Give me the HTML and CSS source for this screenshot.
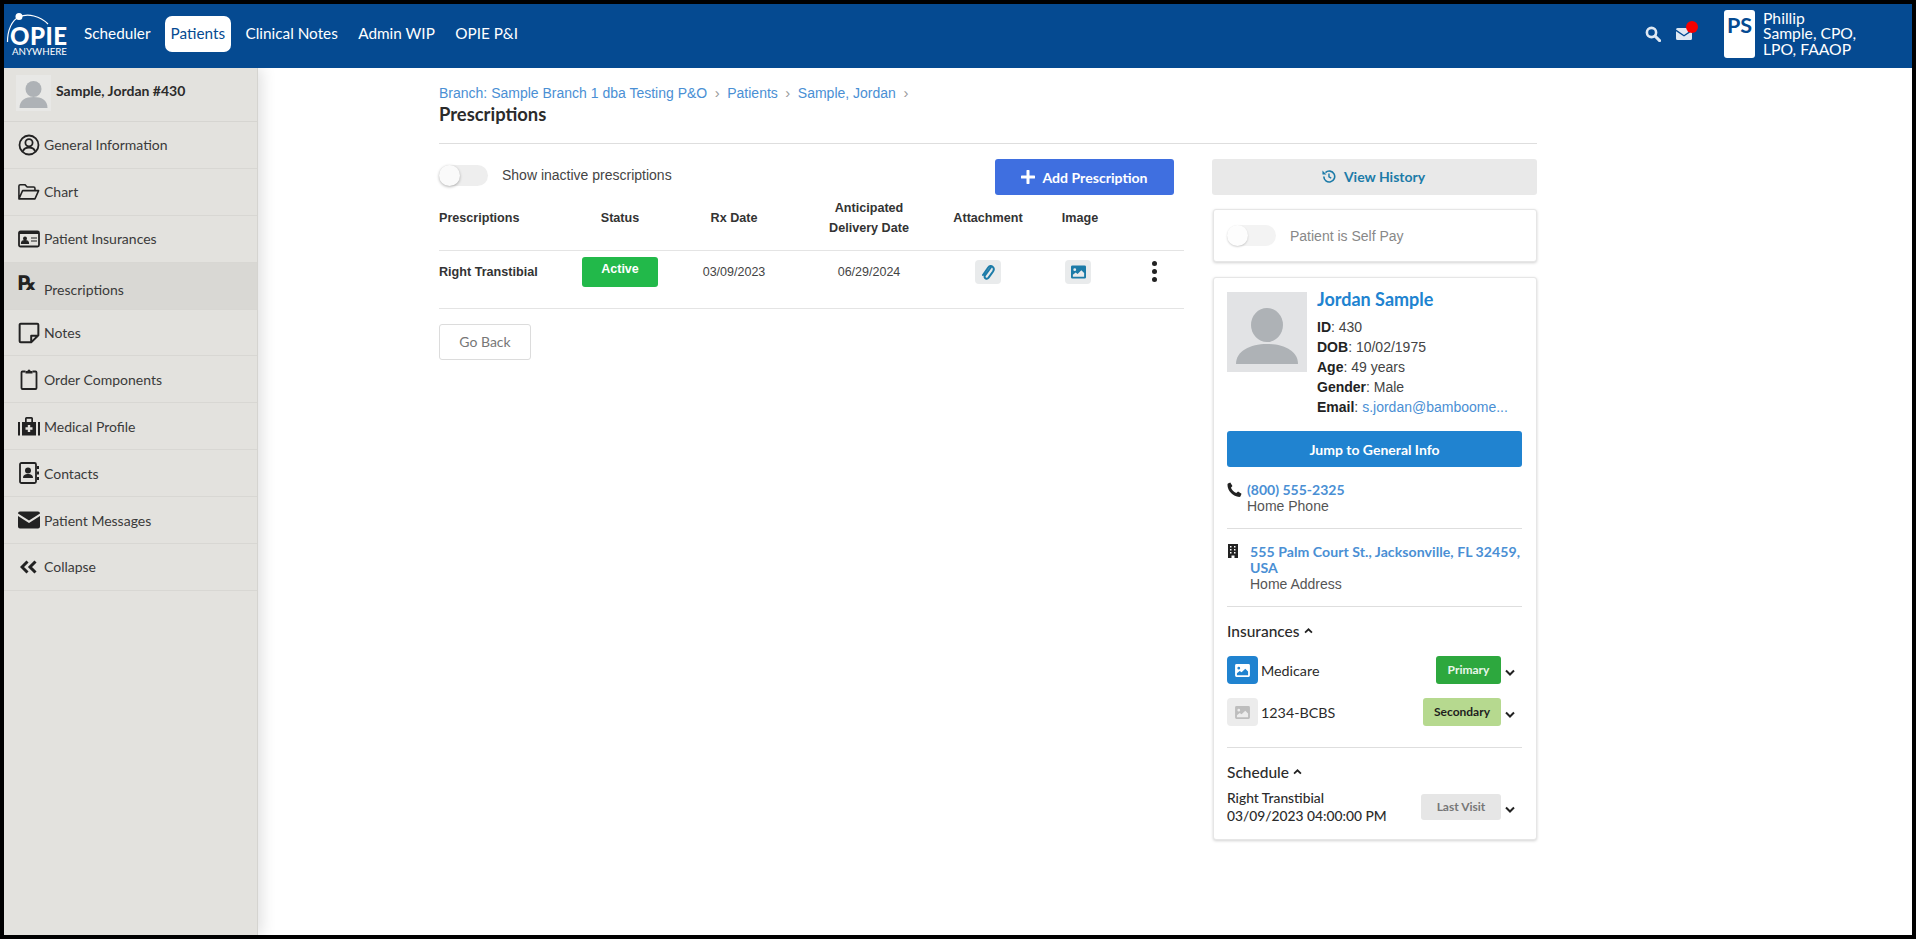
FILE: index.html
```html
<!DOCTYPE html>
<html lang="en">
<head>
<meta charset="utf-8">
<title>Prescriptions</title>
<link rel="stylesheet" href="styles.css">
</head>
<body>
<div class="frame">
  <header class="topbar">
    <div class="logo">
      <svg class="logo-art" viewBox="0 0 62 50">
        <path d="M1.500 30C1.500 18 6 8 13 5C22 1 34 4 42 12" fill="none" stroke="#fff" stroke-width="1.200"/>
        <circle cx="13" cy="4.500" r="3.500" fill="#fff"/>
        <text class="logo-main" x="4" y="33" textLength="57" lengthAdjust="spacing">OPIE</text>
        <text class="logo-sub" x="6" y="42.500" textLength="55" lengthAdjust="spacingAndGlyphs">ANYWHERE</text>
      </svg>
    </div>
    <nav class="topnav">
      <a class="topnav-link">Scheduler</a>
      <a class="topnav-link is-active">Patients</a>
      <a class="topnav-link">Clinical Notes</a>
      <a class="topnav-link">Admin WIP</a>
      <a class="topnav-link">OPIE P&amp;I</a>
    </nav>
    <div class="top-tools">
      <svg class="tool-search" viewBox="0 0 16 16"><circle cx="6.500" cy="6.500" r="4.600" fill="none" stroke="#dfe8f3" stroke-width="2.600"/><path d="M10 10l4.600 4.600" stroke="#dfe8f3" stroke-width="3" stroke-linecap="round"/></svg>
      <span class="tool-mail">
        <svg viewBox="0 0 16 12"><path d="M1.500 0h13A1.500 1.500 0 0 1 16 1.500L8 7 0 1.500A1.500 1.500 0 0 1 1.500 0zM0 3.200l8 5.400 8-5.400v7.300a1.500 1.500 0 0 1-1.500 1.500h-13A1.500 1.500 0 0 1 0 10.500z" fill="#dfe8f3"/></svg>
        <i class="mail-dot"></i>
      </span>
      <div class="user-badge">PS</div>
      <div class="user-name">Phillip<br>Sample, CPO,<br>LPO, FAAOP</div>
    </div>
  </header>

  <div class="body-row">
    <aside class="sidebar">
      <div class="side-patient">
        <span class="side-avatar">
          <svg viewBox="0 0 34 36"><circle cx="17" cy="14" r="8" fill="#aeb2b6"/><path d="M3 33c0-8 6-11 14-11s14 3 14 11z" fill="#aeb2b6"/></svg>
        </span>
        <span class="side-patient-name">Sample, Jordan #430</span>
      </div>
      <a class="side-item">
        <svg class="side-icon" viewBox="0 0 22 22"><circle cx="11" cy="11" r="9.500" fill="none" stroke="#222" stroke-width="1.800"/><circle cx="11" cy="8.800" r="3.600" fill="none" stroke="#222" stroke-width="1.800"/><path d="M4.800 17.500c1-3 3.200-4 6.200-4s5.200 1 6.200 4" fill="none" stroke="#222" stroke-width="1.800"/></svg>
        <span>General Information</span>
      </a>
      <a class="side-item">
        <svg class="side-icon" viewBox="0 0 24 18"><path d="M1 16V2.500A1.500 1.500 0 0 1 2.500 1h5l2.500 2.500h7A1.500 1.500 0 0 1 18.500 5v2.500M1 16.500l4-9h17.500l-4 9z" fill="none" stroke="#222" stroke-width="1.700" stroke-linejoin="round"/></svg>
        <span>Chart</span>
      </a>
      <a class="side-item">
        <svg class="side-icon" viewBox="0 0 22 18"><rect x="1" y="1.500" width="20" height="15" rx="1.500" fill="none" stroke="#222" stroke-width="1.800"/><rect x="1" y="1.500" width="20" height="2.500" fill="#222"/><circle cx="7" cy="8.500" r="2" fill="#222"/><path d="M3.500 13.500c0-2 1.500-2.800 3.500-2.800s3.500.8 3.500 2.800zM13 8h6M13 11h6" fill="#222" stroke="#222" stroke-width="1.200"/></svg>
        <span>Patient Insurances</span>
      </a>
      <a class="side-item is-current">
        <span class="rx-icon">℞</span>
        <span class="side-item-low">Prescriptions</span>
      </a>
      <a class="side-item">
        <svg class="side-icon" viewBox="0 0 20 20"><path d="M2.500 1.500h15a1 1 0 0 1 1 1V12l-6.500 6.500H2.500a1 1 0 0 1-1-1v-15a1 1 0 0 1 1-1zM18 12.500h-6v5.500" fill="none" stroke="#222" stroke-width="1.800" stroke-linejoin="round"/></svg>
        <span>Notes</span>
      </a>
      <a class="side-item">
        <svg class="side-icon" viewBox="0 0 18 22"><path d="M5.500 3.500H2.500a1 1 0 0 0-1 1v15.500a1 1 0 0 0 1 1h13a1 1 0 0 0 1-1V4.500a1 1 0 0 0-1-1h-3" fill="none" stroke="#222" stroke-width="1.800"/><path d="M5.500 5.500V3h2a1.500 1.500 0 0 1 3 0h2v2.500z" fill="#222"/></svg>
        <span>Order Components</span>
      </a>
      <a class="side-item">
        <svg class="side-icon" viewBox="0 0 22 19"><path d="M0 5.500h2V19H0zM20 5.500h2V19h-2zM4 5.500h3V2a1.500 1.500 0 0 1 1.500-1.500h5A1.500 1.500 0 0 1 15 2v3.500h3V19H4zM8.700 5.500h4.600V2.300H8.700z" fill="#222" fill-rule="evenodd"/><path d="M11 8.500v7M7.500 12h7" stroke="#e3e2de" stroke-width="2.400"/></svg>
        <span>Medical Profile</span>
      </a>
      <a class="side-item">
        <svg class="side-icon" viewBox="0 0 20 22"><rect x="1" y="1" width="16" height="20" rx="1.500" fill="none" stroke="#222" stroke-width="1.800"/><circle cx="9" cy="8.500" r="3" fill="#222"/><path d="M4 16c0-3 2.200-4 5-4s5 1 5 4z" fill="#222"/><path d="M18 4h2v3h-2zM18 9.500h2v3h-2zM18 15h2v3h-2z" fill="#222"/></svg>
        <span>Contacts</span>
      </a>
      <a class="side-item">
        <svg class="side-icon" viewBox="0 0 22 17"><path d="M2 0h18a2 2 0 0 1 2 2L11 9 0 2a2 2 0 0 1 2-2zM0 4.500l11 7 11-7V15a2 2 0 0 1-2 2H2a2 2 0 0 1-2-2z" fill="#222"/></svg>
        <span>Patient Messages</span>
      </a>
      <a class="side-item">
        <svg class="side-icon side-icon-small" viewBox="0 0 18 14"><path d="M7.500 1.500L2 7l5.500 5.500M15.500 1.500L10 7l5.500 5.500" fill="none" stroke="#222" stroke-width="3"/></svg>
        <span>Collapse</span>
      </a>
    </aside>

    <main class="main">
      <div class="breadcrumb">
        <a>Branch: Sample Branch 1 dba Testing P&amp;O</a><i>›</i><a>Patients</a><i>›</i><a>Sample, Jordan</a><i>›</i>
      </div>
      <h1 class="page-title">Prescriptions</h1>
      <div class="columns">
        <section class="left-col">
          <div class="toolbar">
            <span class="switch"><i></i></span>
            <span class="switch-label">Show inactive prescriptions</span>
            <button class="btn-add"><svg viewBox="0 0 14 14"><path d="M7 1v12M1 7h12" stroke="#fff" stroke-width="3" stroke-linecap="round"/></svg>Add Prescription</button>
          </div>
          <div class="rx-grid rx-head">
            <div class="cell-left">Prescriptions</div>
            <div>Status</div>
            <div>Rx Date</div>
            <div class="two-line">Anticipated<br>Delivery Date</div>
            <div>Attachment</div>
            <div>Image</div>
            <div></div>
          </div>
          <div class="rx-grid rx-row">
            <div class="cell-left cell-strong">Right Transtibial</div>
            <div><span class="badge-active">Active</span></div>
            <div>03/09/2023</div>
            <div>06/29/2024</div>
            <div><span class="square-btn"><svg class="clip" viewBox="0 0 14 18"><path d="M10.500 3.500L4 12.500c-1.600 2.400 1.800 4.400 3.600 2.200l4.400-6.200C14.500 4.500 10 1 7.200 4.500L2 12" fill="none" stroke="#1c7ba8" stroke-width="2" stroke-linecap="round"/></svg></span></div>
            <div><span class="square-btn img-btn"><svg viewBox="0 0 16 14"><path d="M1.500 0h13A1.500 1.500 0 0 1 16 1.500v11a1.500 1.500 0 0 1-1.500 1.500h-13A1.500 1.500 0 0 1 0 12.500v-11A1.500 1.500 0 0 1 1.500 0zM4 3a1.500 1.500 0 1 0 0 3 1.500 1.500 0 0 0 0-3zM2 12h12V8l-3-3-4 4-2-1.500-3 2.500z" fill="#1c7ba8" fill-rule="evenodd"/></svg></span></div>
            <div><span class="dots"><i></i><i></i><i></i></span></div>
          </div>
          <button class="btn-back">Go Back</button>
        </section>

        <aside class="right-col">
          <button class="btn-history"><svg viewBox="0 0 16 16"><path d="M3 8a5.800 5.800 0 1 0 1.800-4.200" fill="none" stroke="#1c7ba8" stroke-width="1.700"/><path d="M1.500 1.500v4.300h4.300z" fill="#1c7ba8"/><path d="M8.500 4.700V8.300l2.400 1.500" fill="none" stroke="#1c7ba8" stroke-width="1.500"/></svg>View History</button>
          <div class="card self-pay">
            <span class="switch switch-faint"><i></i></span>
            <span class="self-pay-label">Patient is Self Pay</span>
          </div>
          <div class="card patient-card">
            <div class="patient-top">
              <div class="patient-photo">
                <svg viewBox="0 0 80 80"><ellipse cx="40" cy="33" rx="16" ry="17" fill="#aeb2b6"/><path d="M9 72c0-13 14-20 31-20s31 7 31 20z" fill="#aeb2b6"/></svg>
              </div>
              <div class="patient-info">
                <div class="patient-name">Jordan Sample</div>
                <div class="info-line"><b>ID</b>: 430</div>
                <div class="info-line"><b>DOB</b>: 10/02/1975</div>
                <div class="info-line"><b>Age</b>: 49 years</div>
                <div class="info-line"><b>Gender</b>: Male</div>
                <div class="info-line"><b>Email</b>: <a>s.jordan@bamboome...</a></div>
              </div>
            </div>
            <button class="btn-jump">Jump to General Info</button>
            <div class="contact contact-phone">
              <svg class="contact-icon" viewBox="0 0 16 16"><path d="M3.500.5l2.300 3.700-1.600 2c.9 2.400 2.900 4.500 5.600 5.600l2-1.600 3.700 2.300-1.200 3c-.3.300-.7.500-1.200.5C6.500 15.500.5 9.500.5 2.900c0-.5.200-.9.500-1.200z" fill="#222"/></svg>
              <div>
                <a class="contact-link">(800) 555-2325</a>
                <div class="contact-sub">Home Phone</div>
              </div>
            </div>
            <div class="divider"></div>
            <div class="contact contact-address">
              <svg class="contact-icon building" viewBox="0 0 12 14"><path d="M1 0h10v14H7.500v-2.500h-3V14H1z M3 2v1.500h1.500V2zM7 2v1.500h1.500V2zM3 5v1.500h1.500V5zM7 5v1.500h1.500V5zM3 8v1.500h1.500V8zM7 8v1.500h1.500V8z" fill="#222" fill-rule="evenodd"/></svg>
              <div>
                <a class="contact-link address-link">555 Palm Court St., Jacksonville, FL 32459,<br>USA</a>
                <div class="contact-sub">Home Address</div>
              </div>
            </div>
            <div class="divider"></div>
            <div class="section-head ins-head">Insurances <svg class="chev" viewBox="0 0 10 7"><path d="M1 5.500l4-4 4 4" fill="none" stroke="#222" stroke-width="2"/></svg></div>
            <div class="ins-row">
              <span class="ins-thumb thumb-on"><svg viewBox="0 0 16 14"><path d="M1.500 0h13A1.500 1.500 0 0 1 16 1.500v11a1.500 1.500 0 0 1-1.500 1.500h-13A1.500 1.500 0 0 1 0 12.500v-11A1.500 1.500 0 0 1 1.500 0zM4 3a1.500 1.500 0 1 0 0 3 1.500 1.500 0 0 0 0-3zM2 12h12V8l-3-3-4 4-2-1.500-3 2.500z" fill="#fff" fill-rule="evenodd"/></svg></span>
              <span class="ins-name">Medicare</span>
              <span class="ins-tag tag-primary">Primary</span>
              <svg class="chev chev-side" viewBox="0 0 10 7"><path d="M1 1.500l4 4 4-4" fill="none" stroke="#222" stroke-width="2"/></svg>
            </div>
            <div class="ins-row ins-row-2">
              <span class="ins-thumb thumb-off"><svg viewBox="0 0 16 14"><path d="M1.500 0h13A1.500 1.500 0 0 1 16 1.500v11a1.500 1.500 0 0 1-1.500 1.500h-13A1.500 1.500 0 0 1 0 12.500v-11A1.500 1.500 0 0 1 1.500 0zM4 3a1.500 1.500 0 1 0 0 3 1.500 1.500 0 0 0 0-3zM2 12h12V8l-3-3-4 4-2-1.500-3 2.500z" fill="#bdbdbd" fill-rule="evenodd"/></svg></span>
              <span class="ins-name">1234-BCBS</span>
              <span class="ins-tag tag-secondary">Secondary</span>
              <svg class="chev chev-side" viewBox="0 0 10 7"><path d="M1 1.500l4 4 4-4" fill="none" stroke="#222" stroke-width="2"/></svg>
            </div>
            <div class="divider divider-sched"></div>
            <div class="section-head sched-head">Schedule <svg class="chev" viewBox="0 0 10 7"><path d="M1 5.500l4-4 4 4" fill="none" stroke="#222" stroke-width="2"/></svg></div>
            <div class="sched-row">
              <div class="sched-text">Right Transtibial<br>03/09/2023 04:00:00 PM</div>
              <span class="ins-tag tag-last">Last Visit</span>
              <svg class="chev chev-side" viewBox="0 0 10 7"><path d="M1 1.500l4 4 4-4" fill="none" stroke="#222" stroke-width="2"/></svg>
            </div>
          </div>
        </aside>
      </div>
    </main>
  </div>
</div>
</body>
</html>
```

FILE: styles.css
```css
* { box-sizing: border-box; }
html, body { margin: 0; height: 100%; overflow: hidden; background: #000; }
a { color: inherit; text-decoration: none; }
button { font: inherit; border: 0; cursor: pointer; }

.frame {
  height: 939px;
  border: 4px solid #000;
  display: flex;
  flex-direction: column;
  background: #fff;
  font-family: "Liberation Sans", Arial, sans-serif;
  color: #333;
}

/* top bar */
.topbar {
  flex: 0 0 64px;
  background: #054a91;
  display: flex;
  align-items: center;
  padding-bottom: 4px;
  font-family: Lato, sans-serif;
  color: #fff;
  position: relative;
  z-index: 1;
}
.logo {
  position: relative;
  flex: 0 0 80px;
  height: 60px;
}
.logo-art { position: absolute; left: 2px; top: 8px; width: 62px; height: 50px; }
.logo-main { font-family: Lato, sans-serif; font-size: 24px; font-weight: 900; fill: #fff; }
.logo-sub { font-family: Lato, sans-serif; font-size: 10px; fill: #fff; }
.topnav { display: flex; align-items: center; gap: 20.500px; }
.topnav-link { font-size: 15.300px; line-height: 35px; height: 36px; }
.topnav-link.is-active {
  background: #fff;
  color: #054a91;
  border-radius: 7px;
  padding: 0 6px;
  margin: 0 -6px 0 -6.500px;
}
.top-tools { margin-left: auto; display: flex; align-items: center; height: 60px; }
.tool-search { width: 16px; height: 16px; margin-right: 15px; }
.tool-mail { position: relative; display: block; width: 16px; height: 12px; margin-right: 32px; }
.tool-mail svg { display: block; width: 16px; height: 12px; }
.mail-dot {
  position: absolute;
  left: 10px;
  top: -7px;
  width: 12px;
  height: 12px;
  background: #f50000;
  border-radius: 50%;
}
.user-badge {
  width: 31px;
  height: 48px;
  background: #fff;
  color: #054a91;
  border-radius: 3px;
  font-size: 21.500px;
  line-height: 30px;
  font-weight: 700;
  text-align: center;
  margin-right: 8px;
}
.user-name { width: 149px; font-size: 15.700px; line-height: 15.500px; }

/* layout */
.body-row { flex: 1; display: flex; min-height: 0; }

/* sidebar */
.sidebar {
  flex: 0 0 254px;
  background: #e3e2de;
  border-right: 1px solid #d5d4d0;
  box-shadow: 4px 0 14px rgba(0, 0, 0, .12);
  font-family: Lato, sans-serif;
  font-size: 14px;
  color: #3a3a3a;
  position: relative;
}
.side-patient {
  height: 54px;
  display: flex;
  align-items: flex-start;
  padding: 7px 0 0 12px;
  border-bottom: 1px solid #d6d5d1;
}
.side-avatar { width: 35px; height: 36px; background: #e8e8e6; display: block; }
.side-avatar svg { display: block; width: 35px; height: 36px; }
.side-patient-name { margin: 7px 0 0 5px; font-weight: 700; color: #2b2b2b; line-height: 17px; }
.side-item {
  height: 46.900px;
  display: flex;
  align-items: center;
  padding-left: 14px;
  border-bottom: 1.500px solid #d8d7d3;
  position: relative;
}
.side-item.is-current { background: #d9d8d4; }
.side-icon { width: 22px; height: 22px; flex: none; margin-right: 4px; }
.side-icon-small { width: 18px; height: 14px; margin: 0 6px 0 2px; }
.side-item-low { margin-top: 7px; }
.rx-icon {
  flex: none;
  width: 22px;
  height: 26px;
  margin-right: 4px;
  margin-top: -5px;
  color: #222;
  font-family: "DejaVu Sans", sans-serif;
  font-weight: 700;
  font-size: 20px;
  line-height: 26px;
  white-space: nowrap;
}

/* main */
.main { flex: 1; padding: 16px 0 0 181px; min-width: 0; background: #fff; }
.breadcrumb {
  width: 1098px;
  height: 18px;
  font-size: 14px;
  line-height: 16px;
  color: #4a8fd4;
  display: flex;
  align-items: center;
}
.breadcrumb i { font-style: normal; color: #9a9a9a; margin: 0 7.500px; font-size: 15px; }
.page-title {
  width: 1098px;
  margin: 0;
  padding: 1px 0 18px;
  font-family: Lato, sans-serif;
  font-size: 18.400px;
  line-height: 22px;
  font-weight: 700;
  color: #2b2b2b;
  border-bottom: 1px solid #dedede;
}
.columns { width: 1098px; display: flex; gap: 28px; padding-top: 15px; }
.left-col { flex: 0 0 745px; }
.right-col { flex: 0 0 325px; }

/* toolbar */
.toolbar { display: flex; align-items: flex-start; height: 39px; }
.switch {
  display: block;
  flex: none;
  position: relative;
  width: 49px;
  height: 21px;
  margin-top: 6px;
  border-radius: 11px;
  background: #eeeeee;
}
.switch i {
  position: absolute;
  left: 0;
  top: 0;
  width: 21px;
  height: 21px;
  border-radius: 50%;
  background: #fafafa;
  box-shadow: 0 1px 3px rgba(0, 0, 0, .3);
}
.switch-label { margin: 8px 0 0 14px; font-size: 14px; line-height: 16px; color: #444; }
.btn-add {
  margin-left: auto;
  margin-right: 10px;
  width: 179px;
  height: 36px;
  padding-right: 6px;
  background: #3f6fe0;
  border-radius: 3px;
  color: #fff;
  font-family: Lato, sans-serif;
  font-size: 14.100px;
  font-weight: 700;
  display: flex;
  align-items: center;
  justify-content: center;
}
.btn-add svg { width: 14px; height: 14px; margin-right: 7px; }

/* table */
.rx-grid {
  display: grid;
  grid-template-columns: 144px 74px 154px 116px 122px 62px 73px;
  text-align: center;
  font-size: 12.500px;
}
.rx-head {
  height: 53px;
  padding-bottom: 13px;
  font-weight: 700;
  font-size: 12.600px;
  color: #333;
  align-items: center;
  border-bottom: 1.500px solid #e4e4e4;
}
.two-line { line-height: 20px; }
.cell-left { text-align: left; }
.rx-row {
  height: 58px;
  padding-bottom: 16px;
  align-items: center;
  border-bottom: 1.500px solid #e4e4e4;
  color: #444;
}
.cell-strong { font-weight: 700; font-size: 12.600px; color: #333; }
.badge-active {
  display: block;
  width: 76px;
  height: 30px;
  margin-left: -1px;
  background: #22b94a;
  border-radius: 3px;
  color: #fff;
  font-weight: 700;
  font-size: 12.500px;
  line-height: 25px;
}
.square-btn {
  display: inline-flex;
  align-items: center;
  justify-content: center;
  width: 26px;
  height: 24px;
  background: #e9ebec;
  border-radius: 4px;
  vertical-align: middle;
}
.square-btn svg { width: 15px; height: 14px; }
.square-btn .clip { width: 14px; height: 18px; }
.img-btn { margin-right: 4px; }
.dots { display: inline-flex; flex-direction: column; gap: 3px; vertical-align: middle; margin-left: 14px; }
.dots i { width: 5px; height: 5px; border-radius: 50%; background: #222; display: block; }
.btn-back {
  margin-top: 15px;
  display: block;
  width: 92px;
  height: 36px;
  padding-bottom: 2px;
  background: #fff;
  border: 1px solid #dcdcdc;
  border-radius: 3px;
  color: #777;
  font-family: Lato, sans-serif;
  font-size: 14px;
}

/* right column */
.btn-history {
  width: 325px;
  height: 36px;
  padding: 0 3px 2px 0;
  background: #e9e9e9;
  border-radius: 3px;
  color: #1c7ba8;
  font-family: Lato, sans-serif;
  font-size: 14px;
  font-weight: 700;
  display: flex;
  align-items: center;
  justify-content: center;
}
.btn-history svg { width: 15px; height: 15px; margin-right: 8px; }
.card {
  width: 324px;
  margin-left: 1px;
  background: #fff;
  border: 1px solid #e6e6e6;
  border-radius: 3px;
  box-shadow: 0 1px 3px rgba(0, 0, 0, .18);
}
.self-pay {
  margin-top: 14px;
  height: 53px;
  display: flex;
  align-items: center;
  padding-left: 13px;
}
.switch-faint { margin-top: 0; background: #f3f3f3; }
.switch-faint i { background: #fdfdfd; box-shadow: 0 1px 2px rgba(0, 0, 0, .18); }
.self-pay-label { margin-left: 14px; font-size: 14px; color: #888; }
.patient-card { margin-top: 15px; height: 563px; padding: 14px 14px 0 13px; }
.patient-top { display: flex; height: 139px; }
.patient-photo { width: 80px; height: 80px; background: #e2e3e5; flex: none; }
.patient-photo svg { display: block; width: 80px; height: 80px; }
.patient-info { margin-left: 10px; min-width: 0; }
.patient-name {
  font-family: Lato, sans-serif;
  font-size: 18px;
  line-height: 22px;
  font-weight: 700;
  color: #2083d0;
  margin: -4px 0 7px;
}
.info-line { font-size: 14px; line-height: 20px; color: #444; white-space: nowrap; }
.info-line b { color: #222; }
.info-line a { color: #4a8fd4; }
.btn-jump {
  display: block;
  width: 100%;
  height: 36px;
  background: #2083d0;
  border-radius: 3px;
  color: #fff;
  font-family: Lato, sans-serif;
  font-weight: 700;
  font-size: 14px;
}
.contact { display: flex; align-items: flex-start; }
.contact-phone { margin-top: 15px; height: 46px; }
.contact-address { margin-top: 15px; height: 62px; }
.contact-icon { width: 15px; height: 15px; flex: none; margin-right: 5px; }
.building { width: 12px; height: 14px; margin-right: 11px; margin-top: 0; }
.contact-link {
  display: block;
  font-family: Lato, sans-serif;
  font-weight: 700;
  font-size: 14px;
  line-height: 16px;
  color: #4a8fd4;
}
.address-link { font-size: 14.100px; white-space: nowrap; letter-spacing: .05px; }
.contact-sub { font-size: 14px; line-height: 16px; color: #555; }
.divider { height: 1px; background: #dedede; }
.section-head {
  font-family: Lato, sans-serif;
  font-size: 15.500px;
  line-height: 18px;
  font-weight: 500;
  color: #2b2b2b;
  display: flex;
  align-items: center;
}
.chev { width: 9px; height: 6px; margin-left: 4px; flex: none; }
.ins-head { margin-top: 15px; }
.ins-row { display: flex; align-items: center; height: 28px; margin-top: 16px; font-family: Lato, sans-serif; }
.ins-row-2 { margin-top: 14px; }
.ins-thumb {
  width: 31px;
  height: 28px;
  border-radius: 4px;
  display: flex;
  align-items: center;
  justify-content: center;
  flex: none;
}
.ins-thumb svg { width: 15px; height: 13px; }
.thumb-on { background: #2083d0; }
.thumb-off { background: #ececec; }
.ins-name { margin-left: 3px; font-size: 14.300px; color: #2b2b2b; }
.ins-tag {
  margin-left: auto;
  height: 28px;
  border-radius: 3px;
  font-size: 12px;
  font-weight: 700;
  line-height: 28px;
  text-align: center;
}
.tag-primary { width: 65px; background: #2da83e; color: #e8f6ea; }
.tag-secondary { width: 78px; background: #b6d98f; color: #1e1e1e; }
.tag-last { width: 80px; height: 26px; line-height: 26px; background: #e6e6e6; color: #777; }
.chev-side { margin: 4px 7px 0 4px; width: 10px; height: 7px; }
.divider-sched { margin-top: 21px; }
.sched-head { margin-top: 15px; }
.sched-row { display: flex; align-items: center; margin-top: 8px; font-family: Lato, sans-serif; }
.sched-text { font-size: 13.800px; line-height: 18px; color: #2b2b2b; font-weight: 500; }
```
